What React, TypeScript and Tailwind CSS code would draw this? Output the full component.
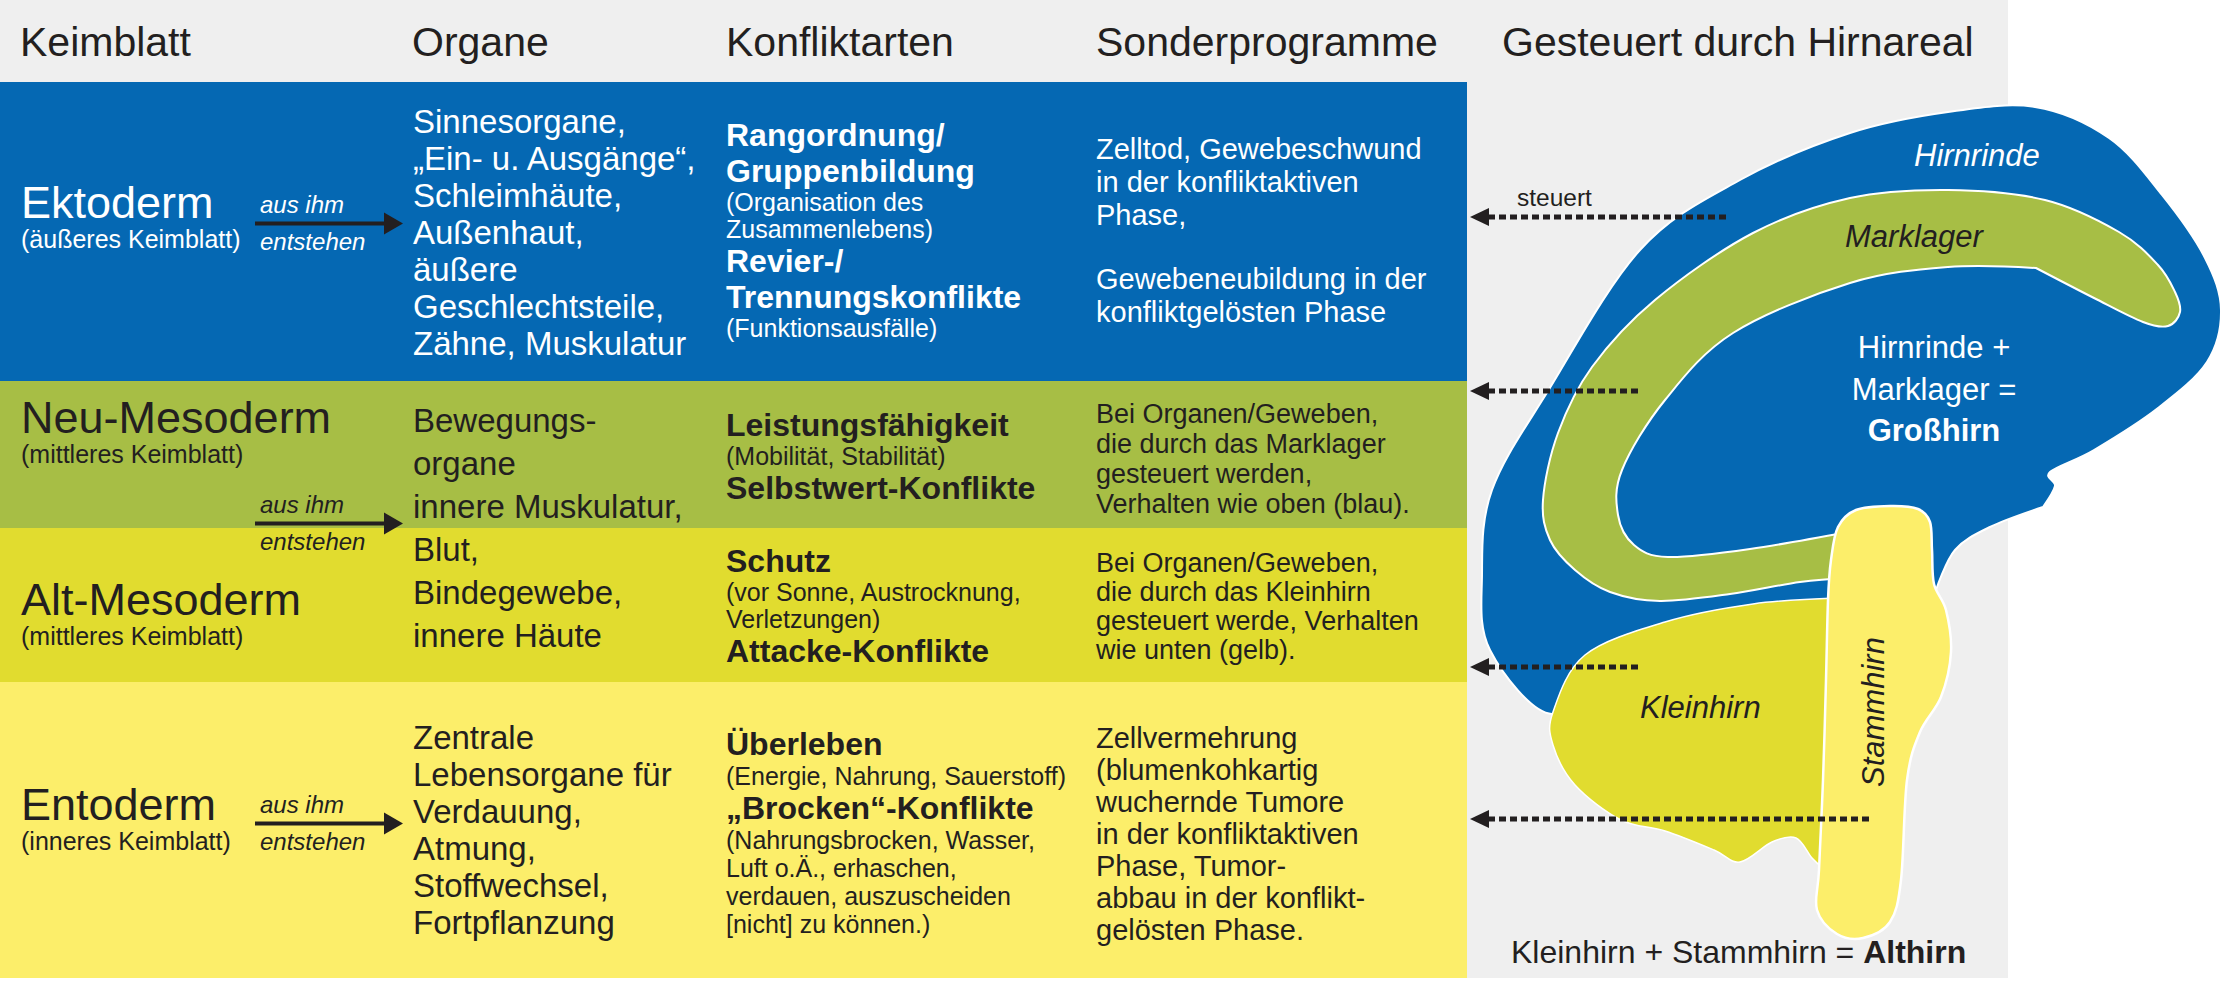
import type { ReactNode } from "react";

const DARK = "#231f20";

type Pt = [number, number, boolean?];

// closed catmull-rom outline; points flagged true keep a hard corner
function outline(points: Pt[]): string {
  const n = points.length;
  let d = `M ${points[0][0]} ${points[0][1]}`;
  for (let i = 0; i < n; i++) {
    const p0 = points[(i - 1 + n) % n];
    const p1 = points[i];
    const p2 = points[(i + 1) % n];
    const p3 = points[(i + 2) % n];
    const c1 = p1[2] ? [p1[0], p1[1]] : [p1[0] + (p2[0] - p0[0]) / 6, p1[1] + (p2[1] - p0[1]) / 6];
    const c2 = p2[2] ? [p2[0], p2[1]] : [p2[0] - (p3[0] - p1[0]) / 6, p2[1] - (p3[1] - p1[1]) / 6];
    d += ` C ${c1[0].toFixed(1)} ${c1[1].toFixed(1)} ${c2[0].toFixed(1)} ${c2[1].toFixed(1)} ${p2[0]} ${p2[1]}`;
  }
  return d + " Z";
}

const cortex = outline([
  [1552, 714], [1490, 650], [1482, 575], [1492, 490], [1548, 391], [1640, 250], [1740, 180],
  [1850, 133], [1948, 112], [2035, 107], [2109, 138], [2162, 195], [2205, 258], [2221, 310],
  [2207, 362], [2158, 408], [2094, 450], [2050, 472], [2055, 486], [2043, 507, true],
  [1990, 527], [1955, 550], [1936, 590, true], [1900, 625], [1830, 614], [1760, 612],
  [1680, 628], [1610, 655],
]);

const marklager = outline([
  [1848, 532, true], [1750, 549], [1668, 557], [1634, 545], [1618, 515], [1622, 470],
  [1665, 400], [1733, 333], [1850, 283], [1948, 267], [2036, 268, true], [2094, 298],
  [2143, 322], [2168, 326], [2180, 312], [2175, 292], [2158, 265], [2119, 232], [2045, 200],
  [1948, 190], [1850, 198], [1753, 233], [1655, 300], [1592, 367], [1558, 433], [1543, 500],
  [1550, 540], [1575, 570], [1610, 592], [1660, 601], [1730, 594], [1800, 582], [1848, 578, true],
]);

const kleinhirn = outline([
  [1553, 712], [1585, 655], [1665, 622], [1753, 604], [1836, 598, true], [1836, 700],
  [1823, 868, true], [1812, 858], [1796, 838], [1772, 842], [1740, 862], [1714, 850],
  [1665, 831], [1621, 820], [1575, 785], [1553, 745],
]);

const stammhirn = outline([
  [1838, 527], [1856, 510], [1890, 506], [1918, 509], [1930, 522], [1932, 550], [1934, 584],
  [1946, 610], [1951, 652], [1941, 697], [1920, 732], [1907, 780], [1901, 880], [1890, 922],
  [1863, 938], [1837, 934], [1817, 910], [1819, 870], [1823, 780], [1826, 680], [1828, 600],
  [1831, 560],
]);

const pointers = [
  { y: 217, x2: 1728 },
  { y: 391, x2: 1638 },
  { y: 667, x2: 1638 },
  { y: 819, x2: 1872 },
];

function Arrow({ light }: { light?: boolean }) {
  return (
    <div className={light ? "w-[150px] italic text-[24px] leading-[26px] text-white" : "w-[150px] italic text-[24px] leading-[26px] text-[#231f20]"}>
      <div className="pl-[5px] whitespace-nowrap">aus ihm</div>
      <svg width="150" height="11" className="block overflow-visible">
        <line x1="0" y1="5.5" x2="132" y2="5.5" stroke={DARK} strokeWidth="4" />
        <polygon points="129,-5.5 148,5.5 129,16.5" fill={DARK} />
      </svg>
      <div className="pl-[5px] whitespace-nowrap">entstehen</div>
    </div>
  );
}

function Label({ name, sub }: { name: string; sub: string }) {
  return (
    <div className="w-[234px] shrink-0">
      <div className="text-[45px] leading-[45px] whitespace-nowrap">{name}</div>
      <div className="text-[25px] leading-[28px] whitespace-nowrap">{sub}</div>
    </div>
  );
}

function Lines({ items }: { items: string[] }) {
  return (
    <>
      {items.map((t) => (
        <div key={t} className="whitespace-nowrap">{t}</div>
      ))}
    </>
  );
}

function B({ children }: { children: ReactNode }) {
  return <div className="font-bold text-[32px] leading-[36px] whitespace-nowrap">{children}</div>;
}

function S({ children }: { children: ReactNode }) {
  return <div className="text-[25px] leading-[27px] whitespace-nowrap">{children}</div>;
}

function Brain() {
  return (
    <svg
      className="absolute left-[1467px] top-0 w-[757px] h-[981px]"
      viewBox="1467 0 757 981"
      width="757"
      height="981"
    >
      <path d={cortex} fill="#0568b3" stroke="#ffffff" strokeWidth="2" />
      <path d={marklager} fill="#a7be45" stroke="#ffffff" strokeWidth="2" />
      <path d={kleinhirn} fill="#e1dc2f" stroke="#ffffff" strokeWidth="1.5" />
      <path d={stammhirn} fill="#fcee6a" stroke="#ffffff" strokeWidth="2.5" />

      <text x="1914" y="166" fontSize="31" fontStyle="italic" fill="#ffffff">Hirnrinde</text>
      <text x="1845" y="247" fontSize="31" fontStyle="italic" fill={DARK}>Marklager</text>
      <text x="1934" y="358" fontSize="31" fill="#ffffff" textAnchor="middle">Hirnrinde +</text>
      <text x="1934" y="400" fontSize="31" fill="#ffffff" textAnchor="middle">Marklager =</text>
      <text x="1934" y="441" fontSize="31" fontWeight="bold" fill="#ffffff" textAnchor="middle">Großhirn</text>
      <text x="1640" y="718" fontSize="31" fontStyle="italic" fill={DARK}>Kleinhirn</text>
      <text transform="translate(1884 787) rotate(-90)" fontSize="31" fontStyle="italic" fill={DARK}>Stammhirn</text>
      <text x="1511" y="963" fontSize="32" fill={DARK}>
        Kleinhirn + Stammhirn = <tspan fontWeight="bold">Althirn</tspan>
      </text>

      <text x="1517" y="206" fontSize="24.5" fill={DARK}>steuert</text>
      {pointers.map((p) => (
        <g key={p.y}>
          <line x1="1488" y1={p.y} x2={p.x2} y2={p.y} stroke={DARK} strokeWidth="5" strokeDasharray="7 4" />
          <polygon points={`1470,${p.y} 1489,${p.y - 9} 1489,${p.y + 9}`} fill={DARK} />
        </g>
      ))}
    </svg>
  );
}

export default function App() {
  return (
    <div className="relative w-[2224px] h-[981px] overflow-hidden bg-white text-[#231f20] font-[family-name:'Liberation_Sans',Arial,sans-serif]">
      <div className="flex h-[978px]">
        <div className="flex w-[1467px] flex-col">
          <div className="grid h-[82px] grid-cols-[412px_314px_370px_371px] bg-[#efefef] text-[41px] leading-[41px]">
            <div className="pl-[20px] pt-[22px]">Keimblatt</div>
            <div className="pt-[22px]">Organe</div>
            <div className="pt-[22px]">Konfliktarten</div>
            <div className="pt-[22px]">Sonderprogramme</div>
          </div>

          {/* Ektoderm */}
          <div className="grid h-[299px] grid-cols-[412px_314px_370px_371px] bg-[#0568b3] text-white">
            <div className="flex items-start pl-[21px]">
              <div className="mt-[98px]">
                <Label name="Ektoderm" sub="(äußeres Keimblatt)" />
              </div>
              <div className="mt-[110px]">
                <Arrow light />
              </div>
            </div>
            <div className="pl-[1px] pt-[21px] text-[33px] leading-[37px]">
              <Lines
                items={[
                  "Sinnesorgane,",
                  "„Ein- u. Ausgänge“,",
                  "Schleimhäute,",
                  "Außenhaut,",
                  "äußere",
                  "Geschlechtsteile,",
                  "Zähne, Muskulatur",
                ]}
              />
            </div>
            <div className="pt-[35px]">
              <B>Rangordnung/</B>
              <B>Gruppenbildung</B>
              <S>(Organisation des</S>
              <S>Zusammenlebens)</S>
              <B>Revier-/</B>
              <B>Trennungskonflikte</B>
              <S>(Funktionsausfälle)</S>
            </div>
            <div className="pt-[51px] text-[29px] leading-[33px]">
              <Lines items={["Zelltod, Gewebeschwund", "in der konfliktaktiven", "Phase,"]} />
              <div className="h-[31px]" />
              <Lines items={["Gewebeneubildung in der", "konfliktgelösten Phase"]} />
            </div>
          </div>

          {/* Neu-Mesoderm */}
          <div className="grid h-[147px] grid-cols-[412px_314px_370px_371px] bg-[#a7be45]">
            <div className="relative pl-[21px] pt-[14px]">
              <Label name="Neu-Mesoderm" sub="(mittleres Keimblatt)" />
              <div className="absolute left-[255px] top-[111px]">
                <Arrow />
              </div>
            </div>
            <div className="pl-[1px] pt-[18px] text-[33px] leading-[43px]">
              <Lines items={["Bewegungs-", "organe", "innere Muskulatur,"]} />
            </div>
            <div className="pt-[26px]">
              <B>Leistungsfähigkeit</B>
              <S>(Mobilität, Stabilität)</S>
              <B>Selbstwert-Konflikte</B>
            </div>
            <div className="pt-[18px] text-[27px] leading-[30px]">
              <Lines
                items={[
                  "Bei Organen/Geweben,",
                  "die durch das Marklager",
                  "gesteuert werden,",
                  "Verhalten wie oben (blau).",
                ]}
              />
            </div>
          </div>

          {/* Alt-Mesoderm */}
          <div className="grid h-[154px] grid-cols-[412px_314px_370px_371px] bg-[#e1dc2f]">
            <div className="pl-[21px] pt-[49px]">
              <Label name="Alt-Mesoderm" sub="(mittleres Keimblatt)" />
            </div>
            <div className="pl-[1px] text-[33px] leading-[43px]">
              <Lines items={["Blut,", "Bindegewebe,", "innere Häute"]} />
            </div>
            <div className="pt-[15px]">
              <B>Schutz</B>
              <S>(vor Sonne, Austrocknung,</S>
              <S>Verletzungen)</S>
              <B>Attacke-Konflikte</B>
            </div>
            <div className="pt-[21px] text-[27px] leading-[29px]">
              <Lines
                items={[
                  "Bei Organen/Geweben,",
                  "die durch das Kleinhirn",
                  "gesteuert werde, Verhalten",
                  "wie unten (gelb).",
                ]}
              />
            </div>
          </div>

          {/* Entoderm */}
          <div className="grid h-[296px] grid-cols-[412px_314px_370px_371px] bg-[#fcee6a]">
            <div className="flex items-start pl-[21px]">
              <div className="mt-[100px]">
                <Label name="Entoderm" sub="(inneres Keimblatt)" />
              </div>
              <div className="mt-[110px]">
                <Arrow />
              </div>
            </div>
            <div className="pl-[1px] pt-[37px] text-[33px] leading-[37px]">
              <Lines
                items={[
                  "Zentrale",
                  "Lebensorgane für",
                  "Verdauung,",
                  "Atmung,",
                  "Stoffwechsel,",
                  "Fortpflanzung",
                ]}
              />
            </div>
            <div className="pt-[44px]">
              <B>Überleben</B>
              <div className="text-[25px] leading-[28px] whitespace-nowrap">(Energie, Nahrung, Sauerstoff)</div>
              <B>„Brocken“-Konflikte</B>
              <div className="text-[25px] leading-[28px]">
                <Lines
                  items={[
                    "(Nahrungsbrocken, Wasser,",
                    "Luft o.Ä., erhaschen,",
                    "verdauen, auszuscheiden",
                    "[nicht] zu können.)",
                  ]}
                />
              </div>
            </div>
            <div className="pt-[40px] text-[29px] leading-[32px]">
              <Lines
                items={[
                  "Zellvermehrung",
                  "(blumenkohkartig",
                  "wuchernde Tumore",
                  "in der konfliktaktiven",
                  "Phase, Tumor-",
                  "abbau in der konflikt-",
                  "gelösten Phase.",
                ]}
              />
            </div>
          </div>
        </div>

        <div className="h-full w-[541px] bg-[#efefef]">
          <div className="pl-[35px] pt-[22px] text-[41px] leading-[41px] whitespace-nowrap">Gesteuert durch Hirnareal</div>
        </div>
      </div>

      <Brain />
    </div>
  );
}
